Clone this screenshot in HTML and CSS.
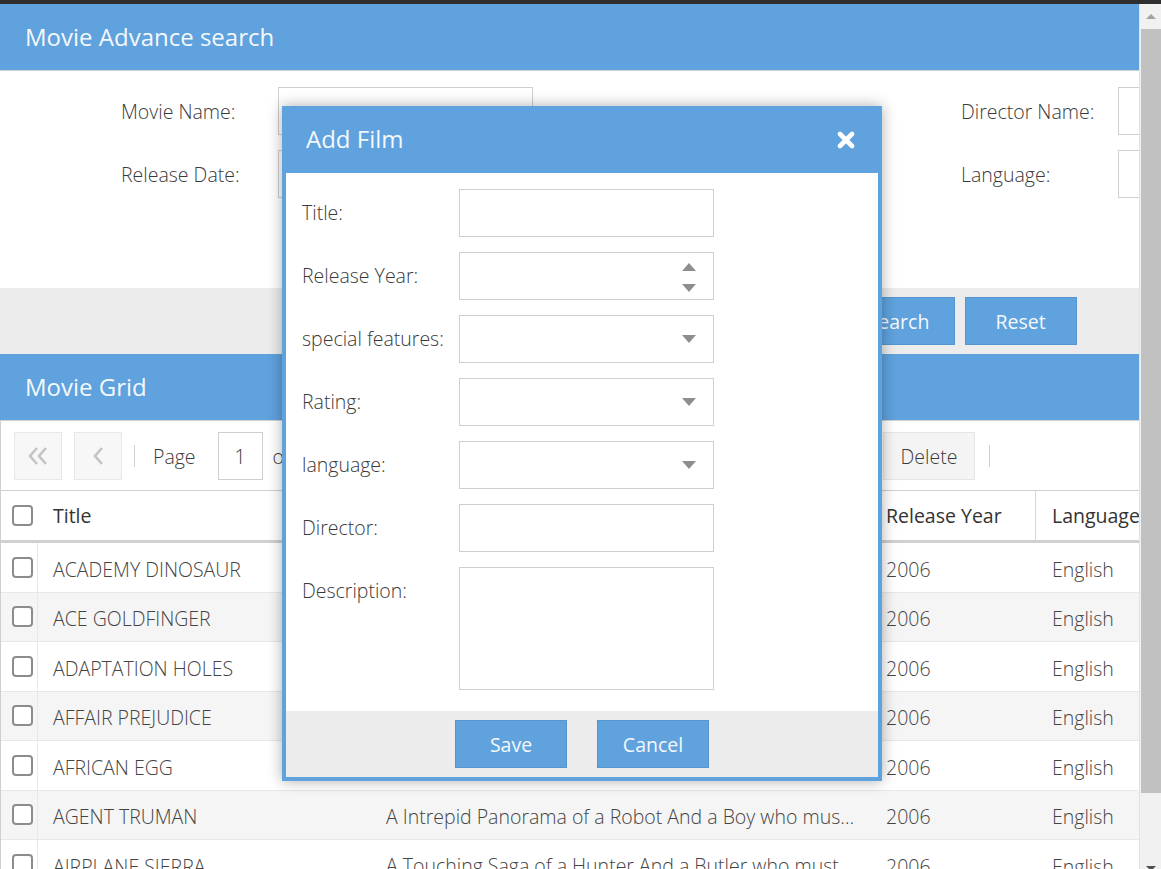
FILE: index.html
```html
<!DOCTYPE html>
<html lang="en">
<head>
<meta charset="utf-8">
<title>Movie Advance search</title>
<link rel="stylesheet" href="styles.css">
</head>
<body>
<div class="topbar"></div>
<div class="viewport">
  <div class="page">
    <div class="wide">
      <section class="panel">
        <div class="panel-title">Movie Advance search</div>
        <div class="search-form">
          <div class="field"><label>Movie Name:</label><div class="input"></div></div>
          <div class="field"><label>Director Name:</label><div class="input"></div></div>
          <div class="field"><label>Release Date:</label><div class="input"></div></div>
          <div class="field"><label>Language:</label><div class="input"></div></div>
        </div>
        <div class="search-actions">
          <button class="btn">Search</button>
          <button class="btn">Reset</button>
        </div>
      </section>

      <section class="panel">
        <div class="panel-title">Movie Grid</div>
        <div class="grid-body">
          <div class="toolbar">
            <div class="pager">
              <button class="tbtn"><svg width="20" height="18" viewBox="0 0 20 18"><path d="M9 1 L2 9 L9 17 M18 1 L11 9 L18 17" fill="none" stroke="#c4c4c4" stroke-width="2.6"/></svg></button>
              <button class="tbtn"><svg width="12" height="18" viewBox="0 0 12 18"><path d="M10 1 L3 9 L10 17" fill="none" stroke="#c4c4c4" stroke-width="2.6"/></svg></button>
              <span class="sep"></span>
              <span class="tlabel">Page</span>
              <span class="page-input">1</span>
              <span class="tlabel">of 100</span>
              <button class="tbtn"><svg width="12" height="18" viewBox="0 0 12 18"><path d="M2 1 L9 9 L2 17" fill="none" stroke="#c4c4c4" stroke-width="2.6"/></svg></button>
              <button class="tbtn"><svg width="20" height="18" viewBox="0 0 20 18"><path d="M2 1 L9 9 L2 17 M11 1 L18 9 L11 17" fill="none" stroke="#c4c4c4" stroke-width="2.6"/></svg></button>
            </div>
            <div class="actions">
              <button class="abtn">Add</button>
              <button class="abtn">Edit</button>
              <button class="abtn">Delete</button>
              <span class="sep"></span>
            </div>
          </div>

          <div class="grid-head">
            <div class="c-check"><span class="cb"></span></div>
            <div class="c-title">Title</div>
            <div class="c-desc">Description</div>
            <div class="c-year">Release Year</div>
            <div class="c-lang">Language</div>
          </div>

          <div class="row">
            <div class="c-check"><span class="cb"></span></div>
            <div class="c-title">ACADEMY DINOSAUR</div>
            <div class="c-desc">A Epic Drama of a Feminist And a Mad Scientist who must Battle a Teacher in The Canadian Rockies</div>
            <div class="c-year">2006</div>
            <div class="c-lang">English</div>
          </div>
          <div class="row alt">
            <div class="c-check"><span class="cb"></span></div>
            <div class="c-title">ACE GOLDFINGER</div>
            <div class="c-desc">A Astounding Epistle of a Database Administrator And a Explorer who must Find a Car in Ancient China</div>
            <div class="c-year">2006</div>
            <div class="c-lang">English</div>
          </div>
          <div class="row">
            <div class="c-check"><span class="cb"></span></div>
            <div class="c-title">ADAPTATION HOLES</div>
            <div class="c-desc">A Astounding Reflection of a Lumberjack And a Car who must Sink a Lumberjack in A Baloon Factory</div>
            <div class="c-year">2006</div>
            <div class="c-lang">English</div>
          </div>
          <div class="row alt">
            <div class="c-check"><span class="cb"></span></div>
            <div class="c-title">AFFAIR PREJUDICE</div>
            <div class="c-desc">A Fanciful Documentary of a Frisbee And a Lumberjack who must Chase a Monkey in A Shark Tank</div>
            <div class="c-year">2006</div>
            <div class="c-lang">English</div>
          </div>
          <div class="row">
            <div class="c-check"><span class="cb"></span></div>
            <div class="c-title">AFRICAN EGG</div>
            <div class="c-desc">A Fast-Paced Documentary of a Pastry Chef And a Dentist who must Pursue a Forensic Psychologist in The Gulf of Mexico</div>
            <div class="c-year">2006</div>
            <div class="c-lang">English</div>
          </div>
          <div class="row alt">
            <div class="c-check"><span class="cb"></span></div>
            <div class="c-title">AGENT TRUMAN</div>
            <div class="c-desc">A Intrepid Panorama of a Robot And a Boy who must Escape a Sumo Wrestler in Ancient China</div>
            <div class="c-year">2006</div>
            <div class="c-lang">English</div>
          </div>
          <div class="row">
            <div class="c-check"><span class="cb"></span></div>
            <div class="c-title">AIRPLANE SIERRA</div>
            <div class="c-desc">A Touching Saga of a Hunter And a Butler who must Discover a Butler in A Jet Boat</div>
            <div class="c-year">2006</div>
            <div class="c-lang">English</div>
          </div>
        </div>
      </section>
    </div>

    <div class="dialog">
      <div class="dialog-head">
        <span class="dialog-title">Add Film</span>
        <svg class="close" width="18" height="18" viewBox="0 0 18 18"><path d="M3 3 L15 15 M15 3 L3 15" stroke="#fff" stroke-width="4.6" stroke-linecap="round"/></svg>
      </div>
      <div class="dialog-body">
        <div class="dfield"><label>Title:</label><div class="input"></div></div>
        <div class="dfield"><label>Release Year:</label><div class="input spin"><span class="tri up"></span><span class="tri down"></span></div></div>
        <div class="dfield"><label>special features:</label><div class="input drop"><span class="tri down"></span></div></div>
        <div class="dfield"><label>Rating:</label><div class="input drop"><span class="tri down"></span></div></div>
        <div class="dfield"><label>language:</label><div class="input drop"><span class="tri down"></span></div></div>
        <div class="dfield"><label>Director:</label><div class="input"></div></div>
        <div class="dfield"><label>Description:</label><div class="input textarea"></div></div>
      </div>
      <div class="dialog-foot">
        <button class="btn">Save</button>
        <button class="btn">Cancel</button>
      </div>
    </div>
  </div>

  <div class="scrollbar">
    <div class="sb-top"><span class="sb-up"></span></div>
    <div class="sb-thumb"></div>
    <div class="sb-track"><span class="sb-down"></span></div>
  </div>
</div>
</body>
</html>
```

FILE: styles.css
```css
* { box-sizing: border-box; }

html, body {
  margin: 0;
  height: 100%;
  overflow: hidden;
}

body {
  font-family: "Open Sans", "Liberation Sans", sans-serif;
  color: #444;
  background: #fff;
}

button {
  font-family: inherit;
}

.topbar {
  height: 4px;
  background: #2f2f2f;
}

.viewport {
  display: flex;
  height: 865px;
}

.page {
  position: relative;
  flex: none;
  width: 1139px;
  overflow: hidden;
}

.wide {
  width: 1919px;
}

.panel-title {
  height: 67px;
  padding: 0 0 1px 25px;
  display: flex;
  align-items: center;
  background: #5fa2dd;
  color: #f4f8fc;
  font-size: 24px;
  border-bottom: 1px solid #d2d2d2;
}

/* search form */
.search-form {
  height: 217px;
  padding: 16px 0 0 121px;
  display: grid;
  grid-template-columns: 840px 840px;
  grid-auto-rows: 48px;
  row-gap: 15px;
  align-content: start;
}

.field {
  display: flex;
  align-items: center;
}

.field label,
.dfield label {
  flex: none;
  width: 157px;
  font-size: 19.5px;
  font-weight: 300;
  color: #3a3a3a;
}

.input {
  position: relative;
  flex: none;
  width: 255px;
  height: 48px;
  border: 1px solid #cfcfcf;
  background: #fff;
}

.search-actions {
  height: 66px;
  background: #ececec;
  display: flex;
  justify-content: center;
  align-items: center;
  gap: 10px;
}

.btn {
  width: 112px;
  height: 48px;
  background: #5fa2dd;
  border: 1px solid #5595d0;
  color: #f4f8fc;
  font-size: 19.5px;
  padding: 0;
}

/* grid */
.grid-body {
  border-left: 1px solid #cfcfcf;
}

.toolbar {
  height: 70px;
  padding-top: 11px;
  display: flex;
  align-items: flex-start;
  border-bottom: 1px solid #cfcfcf;
}

.pager {
  width: 694px;
  display: flex;
  align-items: center;
  padding-left: 13px;
}

.tbtn {
  width: 48px;
  height: 48px;
  margin-right: 12px;
  background: #f7f7f7;
  border: 1px solid #e8e8e8;
  display: flex;
  align-items: center;
  justify-content: center;
  padding: 0;
}

.sep {
  width: 1px;
  height: 22px;
  background: #cfcfcf;
  margin: 0 18px 0 0;
}

.tlabel {
  font-size: 19.5px;
  font-weight: 300;
  color: #3a3a3a;
  margin-right: 22px;
}

.page-input {
  width: 45px;
  height: 48px;
  border: 1px solid #cfcfcf;
  display: flex;
  align-items: center;
  justify-content: center;
  font-size: 19.5px;
  font-weight: 300;
  color: #3a3a3a;
  margin-right: 10px;
}

.actions {
  display: flex;
  align-items: center;
  height: 48px;
}

.abtn {
  width: 92px;
  height: 48px;
  margin-right: 2px;
  background: #f4f4f4;
  border: 1px solid #e6e6e6;
  font-size: 19.5px;
  font-weight: 300;
  color: #3a3a3a;
  padding: 0;
}

.actions .abtn:last-of-type {
  margin-right: 14px;
}

.grid-head,
.row {
  display: flex;
  align-items: stretch;
  font-size: 19.5px;
}

.grid-head {
  height: 52px;
  border-bottom: 3px solid #d0d0d0;
  color: #333;
}

.row {
  height: 49.5px;
  padding-top: 4px;
  border-bottom: 1px solid #e8e8e8;
  font-weight: 300;
  color: #444;
  background: #fff;
}

.row.alt {
  background: #f5f5f5;
}

.grid-head > div,
.row > div {
  display: flex;
  align-items: center;
  white-space: nowrap;
  overflow: hidden;
}

.c-check {
  width: 37px;
  flex: none;
  padding-left: 11px;
}

.row .c-check {
  border-right: 1px solid #e8e8e8;
  margin-top: -4px;
}

.c-title {
  width: 332px;
  flex: none;
  padding-left: 15px;
}

.c-desc {
  width: 500px;
  flex: none;
  padding: 0 16px;
}

.row .c-desc {
  display: block !important;
  padding-right: 13px;
  line-height: 44px;
  text-overflow: ellipsis;
}

.c-year {
  width: 166px;
  flex: none;
  padding-left: 16px;
}

.c-lang {
  width: 200px;
  flex: none;
  padding-left: 16px;
}

.grid-head .c-title,
.grid-head .c-desc,
.grid-head .c-year {
  border-right: 1px solid #d8d8d8;
}

.cb {
  display: block;
  width: 21px;
  height: 21px;
  border: 2px solid #8c8c8c;
  border-radius: 4px;
  background: #fff;
}

/* dialog */
.dialog {
  position: absolute;
  left: 282px;
  top: 102px;
  width: 600px;
  height: 675px;
  background: #5fa2dd;
  padding: 0 4px 4px;
  display: flex;
  flex-direction: column;
  box-shadow: 0 0 14px rgba(0, 0, 0, 0.32);
}

.dialog-head {
  height: 67px;
  flex: none;
  display: flex;
  align-items: center;
  justify-content: space-between;
  padding: 0 23px 3px 20px;
}

.dialog-title {
  font-size: 24px;
  color: #f4f8fc;
}

.close {
  display: block;
  margin-top: 3px;
}

.dialog-body {
  flex: none;
  height: 538px;
  background: #fff;
  padding: 16px 0 0 16px;
  display: flex;
  flex-direction: column;
  gap: 15px;
}

.dfield {
  display: flex;
  align-items: flex-start;
}

.dfield label {
  line-height: 48px;
}

.input.textarea {
  height: 123px;
}

.tri {
  position: absolute;
  right: 17px;
  width: 0;
  height: 0;
  border-left: 7px solid transparent;
  border-right: 7px solid transparent;
}

.tri.up {
  top: 10px;
  border-bottom: 8px solid #8e8e8e;
}

.spin .tri.down {
  top: 31px;
  border-top: 8px solid #8e8e8e;
}

.drop .tri.down {
  top: 19px;
  border-top: 8px solid #8e8e8e;
}

.dialog-foot {
  flex: 1;
  background: #ececec;
  display: flex;
  justify-content: center;
  align-items: center;
  gap: 30px;
}

/* scrollbar */
.scrollbar {
  flex: 1;
  display: flex;
  flex-direction: column;
  background: #f1f1f1;
  border-left: 1px solid #e2e2e2;
}

.sb-top {
  height: 25px;
  display: flex;
  justify-content: center;
  padding-top: 10px;
}

.sb-up {
  width: 0;
  height: 0;
  border-left: 5px solid transparent;
  border-right: 5px solid transparent;
  border-bottom: 5px solid #a3a3a3;
}

.sb-thumb {
  height: 764px;
  margin-left: 1px;
  background: #c1c1c1;
}

.sb-track {
  flex: 1;
  display: flex;
  justify-content: center;
  align-items: flex-end;
}

.sb-down {
  width: 0;
  height: 0;
  margin-bottom: -2px;
  border-left: 5px solid transparent;
  border-right: 5px solid transparent;
  border-top: 5px solid #505050;
}
```
